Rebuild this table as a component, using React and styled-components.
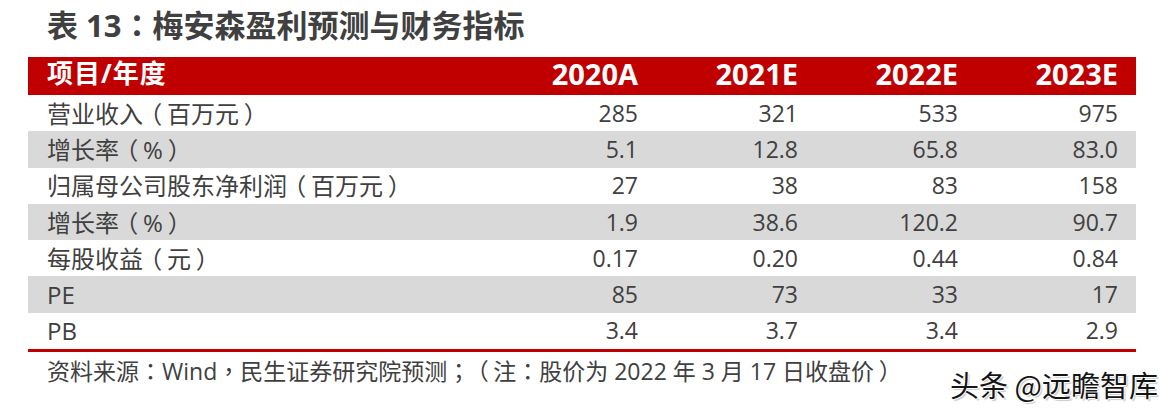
import React from "react";
import styled, { createGlobalStyle } from "styled-components";

const GlobalStyle = createGlobalStyle`
  html, body {
    margin: 0;
    padding: 0;
    background: #ffffff;
  }
  body {
    font-family: "Open Sans", "Noto Sans CJK SC", sans-serif;
    color: #404040;
    text-spacing-trim: space-all;
  }
`;

const years = ["2020A", "2021E", "2022E", "2023E"];

const rows = [
  { label: "营业收入（百万元）", values: ["285", "321", "533", "975"] },
  { label: "增长率（%）", values: ["5.1", "12.8", "65.8", "83.0"], shaded: true },
  { label: "归属母公司股东净利润（百万元）", values: ["27", "38", "83", "158"] },
  { label: "增长率（%）", values: ["1.9", "38.6", "120.2", "90.7"], shaded: true },
  { label: "每股收益（元）", values: ["0.17", "0.20", "0.44", "0.84"] },
  { label: "PE", values: ["85", "73", "33", "17"], shaded: true },
  { label: "PB", values: ["3.4", "3.7", "3.4", "2.9"] },
];

// full-width punctuation is centred in the source font: take the half-width
// form and pad it back out to a full em
const pads = {
  open: "0 0.2em 0 0.3em",
  close: "0 0.3em 0 0.2em",
  mid: "0 0.25em",
};

const Punct = styled.span`
  font-family: "Noto Sans CJK TC", "Noto Sans CJK SC", sans-serif;
  font-feature-settings: "halt";
  padding: ${(p) => pads[p.$kind]};
`;

function Txt({ children }) {
  return children.split(/([（）：；，])/).map((part, i) => {
    if (part === "（") return <Punct key={i} $kind="open">{part}</Punct>;
    if (part === "）") return <Punct key={i} $kind="close">{part}</Punct>;
    if (/^[：；，]$/.test(part)) return <Punct key={i} $kind="mid">{part}</Punct>;
    return part;
  });
}

const Page = styled.div`
  width: 1170px;
  height: 409px;
  padding: 0 34px 0 28px;
  box-sizing: border-box;
  overflow: hidden;
`;

const Title = styled.h1`
  margin: 0;
  height: 57px;
  box-sizing: border-box;
  padding: 8px 0 0 19px;
  font-size: 31px;
  line-height: 1;
  font-weight: 700;
  color: #404040;
  white-space: nowrap;
`;

const Table = styled.div`
  border-bottom: 3px solid #c00000;
`;

const Row = styled.div`
  display: grid;
  grid-template-columns: 1fr 160px 160px 160px 160px;
  align-items: center;
  box-sizing: border-box;
  height: ${(p) => (p.$head ? "38px" : "36.3px")};
  padding: ${(p) => (p.$head ? "0 18px 6px 19px" : "0 18px 0 19px")};
  background: ${(p) => (p.$head ? "#c00000" : p.$shaded ? "#d9d9d9" : "#ffffff")};
  color: ${(p) => (p.$head ? "#ffffff" : "#404040")};
  font-weight: ${(p) => (p.$head ? 700 : 400)};
`;

const Label = styled.div`
  white-space: nowrap;
  line-height: 1;
  font-size: ${(p) => (p.$head ? "26px" : "24px")};
  letter-spacing: ${(p) => (p.$head ? "1px" : "0")};
`;

const Num = styled.div`
  text-align: right;
  white-space: nowrap;
  line-height: 1;
  font-size: ${(p) => (p.$head ? "29px" : "23px")};
`;

const Footer = styled.div`
  display: flex;
  align-items: flex-start;
  justify-content: space-between;
  padding-left: 19px;
`;

const Source = styled.span`
  margin-top: 7px;
  font-size: 23px;
  line-height: 1;
  color: #404040;
  white-space: nowrap;
`;

const Watermark = styled.span`
  margin-top: 18px;
  margin-right: -22px;
  font-family: "Noto Sans CJK SC", sans-serif;
  font-size: 29px;
  line-height: 1;
  color: #151515;
  white-space: nowrap;
  text-shadow: 1px 0 0 #fff, -1px 0 0 #fff, 0 1px 0 #fff, 0 -1px 0 #fff,
    2px 2px 1px rgba(0, 0, 0, 0.2);
`;

export default function App() {
  return (
    <>
      <GlobalStyle />
      <Page>
        <Title>
          <Txt>表 13：梅安森盈利预测与财务指标</Txt>
        </Title>
        <Table>
          <Row $head>
            <Label $head>项目/年度</Label>
            {years.map((y) => (
              <Num key={y} $head>
                {y}
              </Num>
            ))}
          </Row>
          {rows.map((r, i) => (
            <Row key={i} $shaded={r.shaded}>
              <Label>
                <Txt>{r.label}</Txt>
              </Label>
              {r.values.map((v, j) => (
                <Num key={j}>{v}</Num>
              ))}
            </Row>
          ))}
        </Table>
        <Footer>
          <Source>
            <Txt>资料来源：Wind，民生证券研究院预测；（注：股价为 2022 年 3 月 17 日收盘价）</Txt>
          </Source>
          <Watermark>头条 @远瞻智库</Watermark>
        </Footer>
      </Page>
    </>
  );
}
